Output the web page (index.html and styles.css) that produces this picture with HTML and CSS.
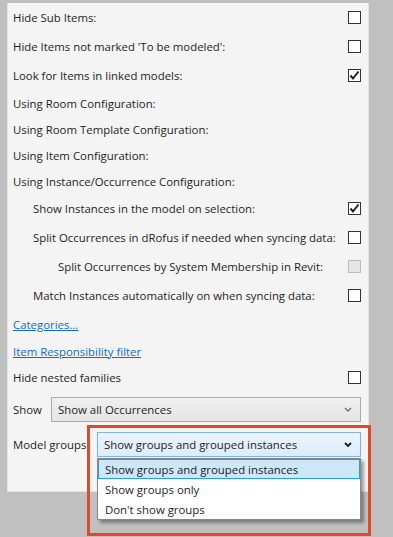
FILE: index.html
```html
<!DOCTYPE html>
<html>
<head>
    <meta charset="UTF-8">
    <title>Filter settings</title>
    <link rel="stylesheet" href="styles.css">
</head>
<body>
    <div class="panel">
        <div class="row row-check">
            <span class="label">Hide Sub Items:</span>
            <span class="checkbox"></span>
        </div>
        <div class="row row-check">
            <span class="label">Hide Items not marked 'To be modeled':</span>
            <span class="checkbox"></span>
        </div>
        <div class="row row-check">
            <span class="label">Look for Items in linked models:</span>
            <span class="checkbox checked">
                <svg viewBox="0 0 13 13" width="13" height="13"><path d="M2.5 6.5 L5 9.5 L10.5 2.5" fill="none" stroke="#1f1f1f" stroke-width="2"/></svg>
            </span>
        </div>

        <div class="row row-text"><span class="label">Using Room Configuration:</span></div>
        <div class="row row-text"><span class="label">Using Room Template Configuration:</span></div>
        <div class="row row-text"><span class="label">Using Item Configuration:</span></div>
        <div class="row row-text"><span class="label">Using Instance/Occurrence Configuration:</span></div>

        <div class="row row-check indent-1">
            <span class="label">Show Instances in the model on selection:</span>
            <span class="checkbox checked">
                <svg viewBox="0 0 13 13" width="13" height="13"><path d="M2.5 6.5 L5 9.5 L10.5 2.5" fill="none" stroke="#1f1f1f" stroke-width="2"/></svg>
            </span>
        </div>
        <div class="row row-check indent-1">
            <span class="label">Split Occurrences in dRofus if needed when syncing data:</span>
            <span class="checkbox"></span>
        </div>
        <div class="row row-check indent-2">
            <span class="label">Split Occurrences by System Membership in Revit:</span>
            <span class="checkbox disabled"></span>
        </div>
        <div class="row row-check indent-1">
            <span class="label">Match Instances automatically on when syncing data:</span>
            <span class="checkbox"></span>
        </div>

        <div class="row row-link"><a class="link" href="#">Categories...</a></div>
        <div class="row row-text"><a class="link" href="#">Item Responsibility filter</a></div>
        <div class="row row-text">
            <span class="label">Hide nested families</span>
            <span class="checkbox"></span>
        </div>

        <div class="field">
            <span class="field-label">Show</span>
            <div class="combo combo-show">
                <span class="combo-text">Show all Occurrences</span>
                <svg class="chevron" viewBox="0 0 8 5" width="8" height="5"><path d="M1 1 L4 4 L7 1" fill="none" stroke="#6d6d6d" stroke-width="1.3"/></svg>
            </div>
        </div>
        <div class="field field-groups">
            <span class="field-label">Model groups</span>
            <div class="combo-wrap">
                <div class="combo combo-open">
                    <span class="combo-text">Show groups and grouped instances</span>
                    <svg class="chevron" viewBox="0 0 8 5" width="8" height="5"><path d="M1 1 L4 4 L7 1" fill="none" stroke="#1a1a1a" stroke-width="1.8"/></svg>
                </div>
                <ul class="dropdown">
                    <li class="option selected">Show groups and grouped instances</li>
                    <li class="option">Show groups only</li>
                    <li class="option">Don't show groups</li>
                </ul>
            </div>
        </div>
    </div>

    <!-- annotation frame around the open combo -->
    <div class="highlight"></div>
</body>
</html>
```

FILE: styles.css
```css
body {
    margin: 0;
    height: 537px;
    background: #c0c0c0;
    font-family: 'Segoe UI', 'Open Sans', sans-serif;
    font-size: 11.4px;
    color: #1e1e1e;
    position: relative;
    overflow: hidden;
}
.panel {
    margin: 3px 0 0 7px;
    width: 362px;
    height: 489px;
    box-sizing: border-box;
    background: #f4f4f4;
    border: 1px solid #e4e4e4;
    border-top: none;
    padding: 0 7px 0 5px;
    display: flex;
    flex-direction: column;
}
.row {
    display: flex;
    align-items: center;
    justify-content: space-between;
}
.row-check {
    height: 29px;
}
.row-text {
    height: 26px;
}
.row-link {
    height: 28px;
}
.indent-1 {
    padding-left: 20px;
}
.indent-2 {
    padding-left: 45px;
}
.label {
    white-space: nowrap;
}
.checkbox {
    width: 13px;
    height: 13px;
    box-sizing: border-box;
    border: 1px solid #333;
    background: #fff;
    flex-shrink: 0;
    display: flex;
}
.checkbox svg {
    margin: -1px;
}
.checkbox.disabled {
    border-color: #bcbcbc;
    background: #e6e6e6;
}
.link {
    color: #0f6bd0;
    text-decoration: underline;
}
.field {
    display: flex;
    align-items: center;
    margin-top: 7px;
    height: 25px;
}
.field-groups {
    margin-top: 10px;
}
.field-label {
    width: 38px;
    flex-shrink: 0;
    white-space: nowrap;
}
.field-groups .field-label {
    width: 84px;
}
.combo-wrap {
    flex: 1;
    position: relative;
    height: 25px;
}
.combo {
    flex: 1;
    height: 25px;
    box-sizing: border-box;
    display: flex;
    align-items: center;
    justify-content: space-between;
    padding: 0 8px 0 6px;
    border: 1px solid #acacac;
    background: linear-gradient(#f0f0f0, #e5e5e5);
}
.combo-open {
    border-color: #7eb4ea;
    background: linear-gradient(#ecf4fc, #dcecfc);
}
.combo-text {
    white-space: nowrap;
}
.dropdown {
    position: absolute;
    top: 26px;
    left: 0;
    right: 0;
    margin: 0;
    padding: 0;
    list-style: none;
    background: #fff;
    border: 1px solid #828790;
    box-shadow: 3px 3px 3px rgba(0, 0, 0, 0.35);
    z-index: 2;
}
.option {
    height: 20px;
    line-height: 19px;
    padding-left: 6px;
    box-sizing: border-box;
    border: 1px solid transparent;
    white-space: nowrap;
}
.option.selected {
    background: #cce8f7;
    border-color: #26a0da;
}
.highlight {
    position: absolute;
    left: 87px;
    top: 425px;
    width: 284px;
    height: 111px;
    box-sizing: border-box;
    border: 3px solid #e24a27;
    z-index: 3;
}
```
